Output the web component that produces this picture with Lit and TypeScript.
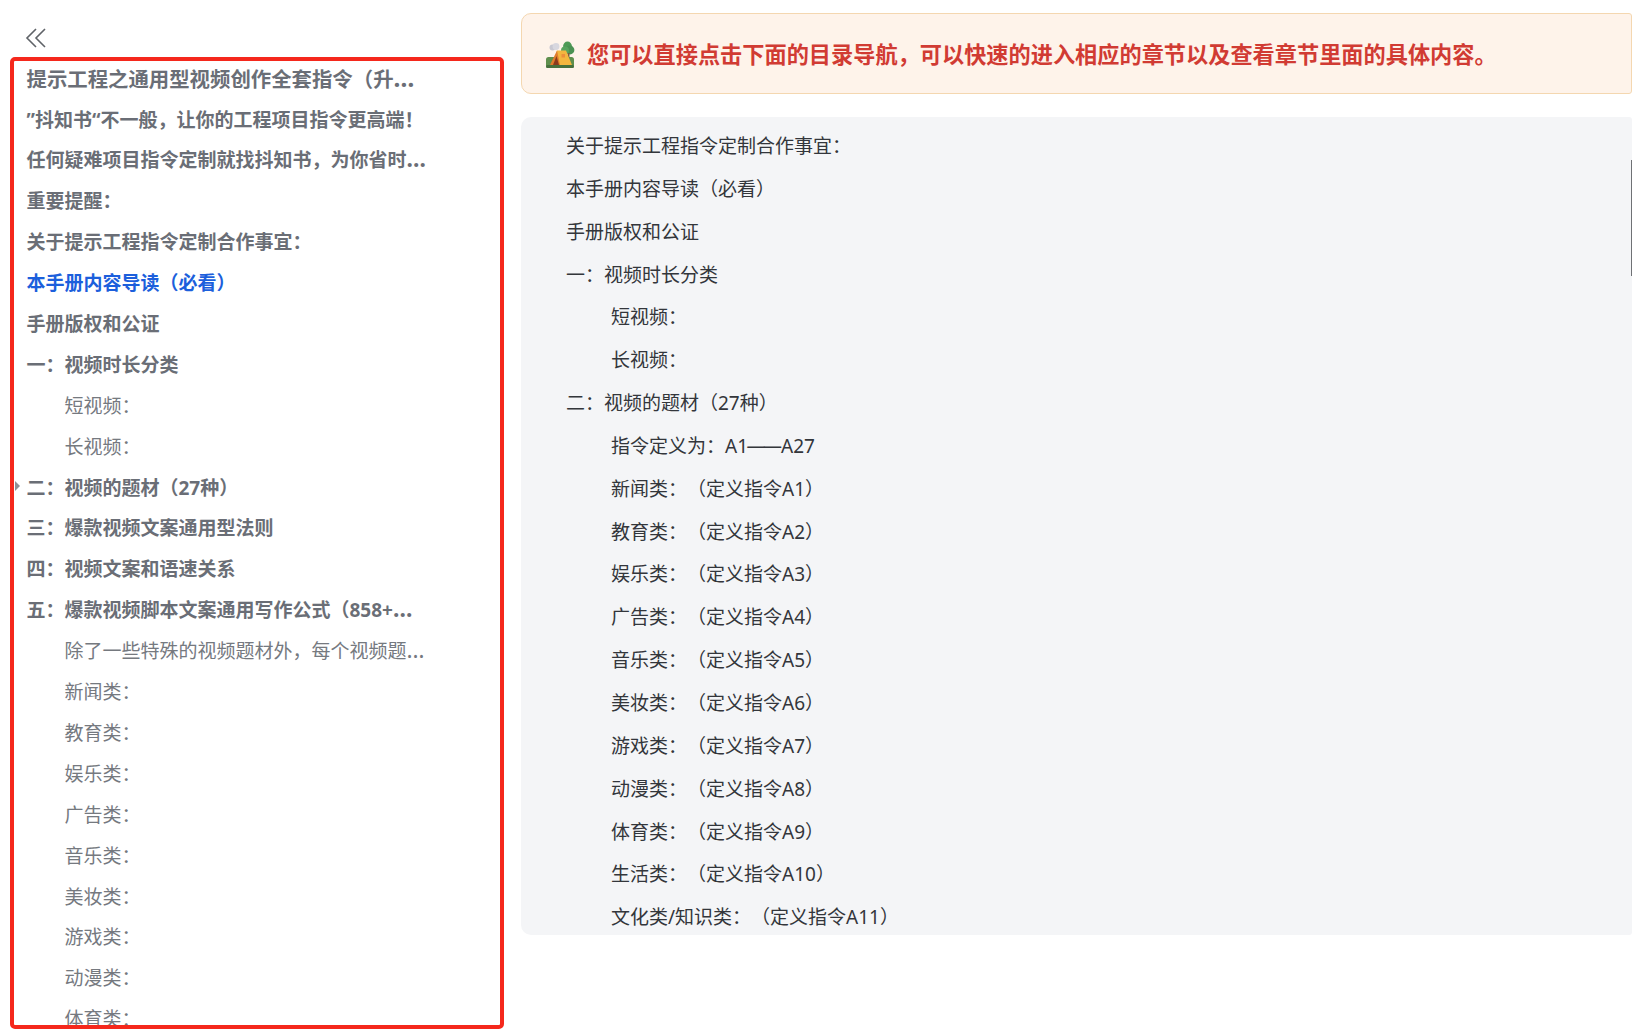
import { LitElement, html, css, TemplateResult } from "lit";
import { customElement } from "lit/decorators.js";

type Row = { t: string | TemplateResult; lv: number; active?: boolean; title?: boolean };

const ell = html`<span class="ell">…</span>`;

const side: Row[] = [
  { t: html`提示工程之通用型视频创作全套指令（升${ell}`, lv: 0, title: true },
  { t: "”抖知书“不一般，让你的工程项目指令更高端！", lv: 0 },
  { t: html`任何疑难项目指令定制就找抖知书，为你省时${ell}`, lv: 0 },
  { t: "重要提醒：", lv: 0 },
  { t: "关于提示工程指令定制合作事宜：", lv: 0 },
  { t: "本手册内容导读（必看）", lv: 0, active: true },
  { t: "手册版权和公证", lv: 0 },
  { t: "一：视频时长分类", lv: 0 },
  { t: "短视频：", lv: 1 },
  { t: "长视频：", lv: 1 },
  { t: "二：视频的题材（27种）", lv: 0 },
  { t: "三：爆款视频文案通用型法则", lv: 0 },
  { t: "四：视频文案和语速关系", lv: 0 },
  { t: html`五：爆款视频脚本文案通用写作公式（858+${ell}`, lv: 0 },
  { t: html`除了一些特殊的视频题材外，每个视频题${ell}`, lv: 1 },
  { t: "新闻类：", lv: 1 },
  { t: "教育类：", lv: 1 },
  { t: "娱乐类：", lv: 1 },
  { t: "广告类：", lv: 1 },
  { t: "音乐类：", lv: 1 },
  { t: "美妆类：", lv: 1 },
  { t: "游戏类：", lv: 1 },
  { t: "动漫类：", lv: 1 },
  { t: "体育类：", lv: 1 },
];

const toc: Row[] = [
  { t: "关于提示工程指令定制合作事宜：", lv: 0 },
  { t: "本手册内容导读（必看）", lv: 0 },
  { t: "手册版权和公证", lv: 0 },
  { t: "一：视频时长分类", lv: 0 },
  { t: "短视频：", lv: 1 },
  { t: "长视频：", lv: 1 },
  { t: "二：视频的题材（27种）", lv: 0 },
  { t: html`指令定义为：A1<span class="dash">——</span>A27`, lv: 1 },
  { t: "新闻类：（定义指令A1）", lv: 1 },
  { t: "教育类：（定义指令A2）", lv: 1 },
  { t: "娱乐类：（定义指令A3）", lv: 1 },
  { t: "广告类：（定义指令A4）", lv: 1 },
  { t: "音乐类：（定义指令A5）", lv: 1 },
  { t: "美妆类：（定义指令A6）", lv: 1 },
  { t: "游戏类：（定义指令A7）", lv: 1 },
  { t: "动漫类：（定义指令A8）", lv: 1 },
  { t: "体育类：（定义指令A9）", lv: 1 },
  { t: "生活类：（定义指令A10）", lv: 1 },
  { t: "文化类/知识类：（定义指令A11）", lv: 1 },
];

@customElement("app-root")
export class AppRoot extends LitElement {
  static styles = css`
    :host {
      display: block;
      position: relative;
      width: 1632px;
      height: 1030px;
      overflow: hidden;
      background: #fff;
      font-family: "Noto Sans", "Noto Sans CJK SC", sans-serif;
    }
    .page { display: flex; height: 100%; }
    .sidebar { flex: none; width: 521px; display: flex; flex-direction: column; height: 1029px; overflow: hidden; }
    .side-head { flex: none; height: 57px; padding: 27px 0 0 25px; box-sizing: border-box; }
    .side-head svg { display: block; }
    .side-list { flex: 1; min-height: 0; overflow: hidden; padding-top: 1.7px; }
    .side-row {
      position: relative;
      width: 440px;
      margin-left: 26.5px;
      height: 40.9px;
      line-height: 40.9px;
      font-size: 19px;
      color: #6a6e76;
      white-space: nowrap;
    }
    .side-row.top { font-weight: 700; }
    .side-row.title { font-size: 20.4px; }
    .side-row.sub { width: 400px; margin-left: 64.5px; font-weight: 400; color: #75797f; }
    .side-row.active { color: #1c5fdc; }
    .ell { font-size: 1.2em; line-height: 1; }
    .annot {
      position: absolute;
      left: 9.5px;
      top: 57px;
      width: 494px;
      height: 972px;
      box-sizing: border-box;
      border: 4.5px solid #f5281c;
      border-radius: 5px;
      pointer-events: none;
    }
    .marker {
      position: absolute;
      left: 15px;
      top: 481px;
      width: 0;
      height: 0;
      border-left: 5px solid #8d9096;
      border-top: 5px solid transparent;
      border-bottom: 5px solid transparent;
    }
    .main { flex: 1; min-width: 0; padding-top: 13px; display: flex; flex-direction: column; }
    .banner {
      flex: none;
      height: 81px;
      box-sizing: border-box;
      border: 1px solid #f4d7b0;
      border-radius: 10px 3px 3px 10px;
      background: #fef3ea;
      display: flex;
      align-items: center;
      gap: 12px;
      padding-left: 23px;
      font-size: 22.2px;
      font-weight: 700;
      color: #d13b33;
    }
    .banner svg { flex: none; margin-top: 2px; }
    .panel {
      position: relative;
      flex: none;
      margin-top: 23px;
      height: 818px;
      box-sizing: border-box;
      padding: 8px 0 0 45px;
      border-radius: 10px 3px 3px 10px;
      background: #f4f5f7;
      overflow: hidden;
    }
    .toc-row {
      height: 42.85px;
      line-height: 42.85px;
      font-size: 19px;
      color: #33363b;
      white-space: nowrap;
      text-spacing-trim: space-all;
    }
    .toc-row.sub { padding-left: 45px; }
    .dash { letter-spacing: -2.5px; margin-left: -1.5px; margin-right: 1.5px; }
    .thumb {
      position: absolute;
      right: 0;
      top: 43px;
      width: 1px;
      height: 116px;
      background: #6f7175;
    }
  `;

  render() {
    return html`
      <div class="page">
        <aside class="sidebar">
          <div class="side-head">
            <svg width="22" height="22" viewBox="0 0 22 22" fill="none" stroke="#5f6368" stroke-width="1.6">
              <path d="M11 2 L2 11 L11 20" />
              <path d="M20 2 L11 11 L20 20" />
            </svg>
          </div>
          <div class="side-list">
            ${side.map(
              (r) =>
                html`<div class="side-row ${r.lv ? "sub" : "top"} ${r.active ? "active" : ""} ${r.title ? "title" : ""}">${r.t}</div>`
            )}
          </div>
        </aside>
        <main class="main">
          <div class="banner">
            <svg width="30" height="28" viewBox="0 0 30 28">
              <circle cx="7.5" cy="6.5" r="3" fill="#c9c8d2" />
              <circle cx="11" cy="5.5" r="3.4" fill="#d8d7df" />
              <circle cx="22.5" cy="5" r="4.4" fill="#4e9a56" />
              <circle cx="25" cy="9" r="4.4" fill="#4a9152" />
              <circle cx="20" cy="9.5" r="4" fill="#58a35e" />
              <rect x="22.5" y="12" width="2" height="6" fill="#7a5a3a" />
              <rect x="1" y="16" width="28" height="11" rx="2.5" fill="#5f8f4d" />
              <rect x="1" y="24" width="28" height="3" rx="1.5" fill="#47703d" />
              <path d="M12 9.5 L21 9.5 L27 24 L9 24 Z" fill="#f4b63f" />
              <path d="M12 9.5 L5 24 L15 24 Z" fill="#e07c2c" />
              <path d="M11.5 15 L8 24 L14 24 Z" fill="#8a3b1e" />
              <rect x="16.5" y="13" width="3.5" height="3.5" fill="#ee8f3a" />
            </svg>
            <span>您可以直接点击下面的目录导航，可以快速的进入相应的章节以及查看章节里面的具体内容。</span>
          </div>
          <div class="panel">
            ${toc.map((r) => html`<div class="toc-row ${r.lv ? "sub" : ""}">${r.t}</div>`)}
            <div class="thumb"></div>
          </div>
        </main>
      </div>
      <div class="marker"></div>
      <div class="annot"></div>
    `;
  }
}
